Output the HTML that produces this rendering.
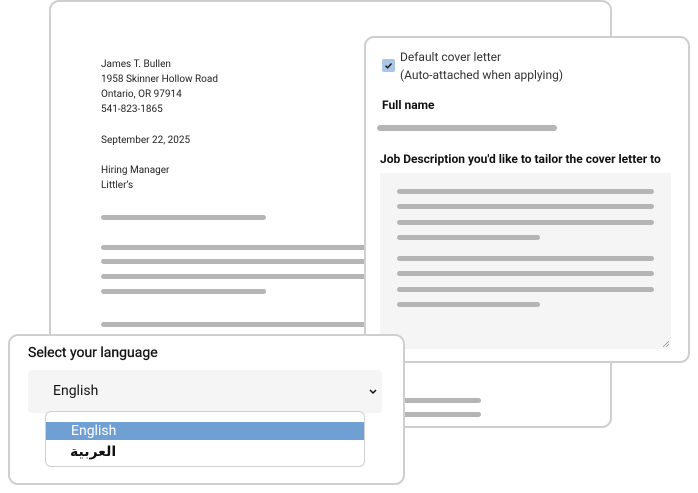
<!DOCTYPE html>
<html><head><meta charset="utf-8"><style>
*{box-sizing:border-box;margin:0;padding:0}
body{width:698px;height:493px;background:#fff;position:relative;overflow:hidden;font-family:"Roboto","Liberation Sans",sans-serif;color:#111}
.abs{position:absolute}
.bar{position:absolute;height:5px;border-radius:3px;background:#b5b5b5}
.card{position:absolute;background:#fff;border:2px solid #cfcfcf;border-radius:10px}
.lt{position:absolute;left:101px;font-size:10px;line-height:15px;color:#222}
</style></head><body>
<div class="card" style="left:49px;top:0;width:563px;height:428px"></div>
<div class="lt" style="top:57px">James T. Bullen<br>1958 Skinner Hollow Road<br>Ontario, OR 97914<br>541-823-1865</div>
<div class="lt" style="top:133px">September 22, 2025</div>
<div class="lt" style="top:163px">Hiring Manager<br>Littler’s</div>
<div class="bar" style="left:101px;top:215px;width:165px"></div>
<div class="bar" style="left:101px;top:245px;width:270px"></div>
<div class="bar" style="left:101px;top:259px;width:270px"></div>
<div class="bar" style="left:101px;top:274px;width:270px"></div>
<div class="bar" style="left:101px;top:289px;width:165px"></div>
<div class="bar" style="left:101px;top:322px;width:270px"></div>
<div class="bar" style="left:400px;top:398px;width:81px"></div>
<div class="bar" style="left:400px;top:412px;width:81px"></div>

<div class="card" style="left:364px;top:36px;width:326px;height:327px"></div>
<div class="abs" style="left:382px;top:59px;width:13px;height:13px;background:#a9c6e8;border-radius:2px"></div>
<svg class="abs" style="left:382px;top:59px" width="13" height="13"><path d="M3.5 6.8 L5.6 8.8 L9.5 4.5" stroke="#111" stroke-width="1.4" fill="none"/></svg>
<div class="abs" style="left:400px;top:48px;font-size:12px;line-height:18px;color:#333">Default cover letter<br>(Auto-attached when applying)</div>
<div class="abs" style="left:382px;top:98px;font-size:12px;font-weight:bold;color:#111">Full name</div>
<div class="bar" style="left:377px;top:125px;width:180px;height:6px"></div>
<div class="abs" style="left:380px;top:152px;font-size:12px;font-weight:bold;color:#111">Job Description you'd like to tailor the cover letter to</div>
<div class="abs" style="left:380px;top:173px;width:291px;height:176px;background:#f5f5f5;border-radius:2px"></div>
<div class="bar" style="left:397px;top:189px;width:257px"></div>
<div class="bar" style="left:397px;top:204px;width:257px"></div>
<div class="bar" style="left:397px;top:220px;width:257px"></div>
<div class="bar" style="left:397px;top:235px;width:143px"></div>
<div class="bar" style="left:397px;top:256px;width:257px"></div>
<div class="bar" style="left:397px;top:271px;width:257px"></div>
<div class="bar" style="left:397px;top:287px;width:257px"></div>
<div class="bar" style="left:397px;top:302px;width:143px"></div>
<svg class="abs" style="left:663px;top:341px" width="6" height="6"><path d="M0 6L6 0M3 6L6 3" stroke="#999" stroke-width="0.8"/></svg>

<div class="card" style="left:8px;top:334px;width:397px;height:151px"></div>
<div class="abs" style="left:28px;top:345px;font-size:14px;color:#111;-webkit-text-stroke:0.3px #111">Select your language</div>
<div class="abs" style="left:28px;top:370px;width:354px;height:43px;background:#f5f5f5;border-radius:4px"></div>
<div class="abs" style="left:53px;top:383px;font-size:14px;color:#111">English</div>
<svg class="abs" style="left:369px;top:389px" width="8" height="6"><path d="M1 1L4 4L7 1" stroke="#111" stroke-width="1.5" fill="none"/></svg>
<div class="abs" style="left:45px;top:411px;width:320px;height:56px;border:1px solid #d0d0d0;border-radius:6px;background:#fff"></div>
<div class="abs" style="left:46px;top:422px;width:318px;height:18px;background:#6f9fd3"></div>
<div class="abs" style="left:71px;top:422px;font-size:14px;line-height:18px;color:#fff">English</div>
<div class="abs" style="left:70px;top:442px;font-size:14px;line-height:20px;font-weight:bold;color:#111;font-family:'DejaVu Sans',sans-serif">العربية</div>
</body></html>
